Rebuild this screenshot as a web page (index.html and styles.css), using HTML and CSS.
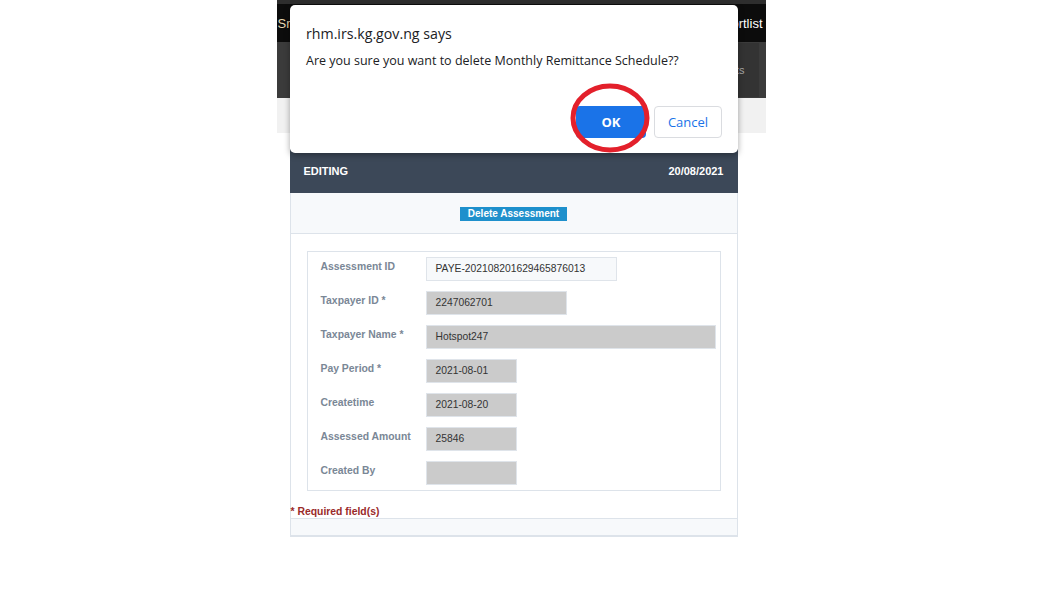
FILE: index.html
```html
<!DOCTYPE html>
<html>
<head>
<meta charset="utf-8">
<link rel="stylesheet" href="styles.css">
</head>
<body>
<div class="shell">
  <div class="tabstrip">
    <span class="tab-left">Sm</span>
    <span class="tab-right">Shortlist</span>
  </div>
  <div class="navbar">
    <div class="navbox">Reports</div>
  </div>
  <div class="subbar"></div>

  <div class="card">
    <div class="card-head">
      <span>EDITING</span>
      <span>20/08/2021</span>
    </div>
    <div class="toolbar">
      <button class="btn-delete">Delete Assessment</button>
    </div>
    <div class="card-body">
      <div class="fieldset">
        <div class="row">
          <label class="lbl">Assessment ID</label>
          <div class="inp inp-light w190">PAYE-202108201629465876013</div>
        </div>
        <div class="row">
          <label class="lbl">Taxpayer ID *</label>
          <div class="inp w140">2247062701</div>
        </div>
        <div class="row">
          <label class="lbl">Taxpayer Name *</label>
          <div class="inp w290">Hotspot247</div>
        </div>
        <div class="row">
          <label class="lbl">Pay Period *</label>
          <div class="inp w90">2021-08-01</div>
        </div>
        <div class="row">
          <label class="lbl">Createtime</label>
          <div class="inp w90">2021-08-20</div>
        </div>
        <div class="row">
          <label class="lbl">Assessed Amount</label>
          <div class="inp w90">25846</div>
        </div>
        <div class="row">
          <label class="lbl">Created By</label>
          <div class="inp w90"></div>
        </div>
      </div>
      <div class="required">* Required field(s)</div>
    </div>
    <div class="card-foot"></div>
  </div>
</div>

<div class="dialog">
  <div class="dlg-title">rhm.irs.kg.gov.ng says</div>
  <div class="dlg-msg">Are you sure you want to delete Monthly Remittance Schedule??</div>
  <div class="dlg-actions">
    <button class="dlg-ok">OK</button>
    <button class="dlg-cancel">Cancel</button>
  </div>
</div>

<svg class="circle" width="90" height="80" viewBox="0 0 90 80">
  <ellipse cx="45" cy="40" rx="37" ry="32" fill="none" stroke="#e3202b" stroke-width="5"/>
</svg>
</body>
</html>
```

FILE: styles.css
```css
html, body {
  margin: 0;
  padding: 0;
  background: #ffffff;
}
body {
  font-family: "Liberation Sans", Arial, sans-serif;
  position: relative;
  height: 598px;
  overflow: hidden;
}
.shell {
  width: 489px;
  margin: 0 auto;
}
.tabstrip {
  height: 38px;
  border-top: 4px solid #2e2e2e;
  background: #0c0c0c;
  display: flex;
  justify-content: space-between;
  align-items: center;
  font-size: 13px;
  white-space: nowrap;
}
.tab-left {
  color: #e7d7b0;
  margin-left: 1px;
}
.tab-right {
  color: #ffffff;
  margin-right: 3px;
}
.navbar {
  height: 56px;
  background: #3b3b3b;
  display: flex;
  justify-content: flex-end;
  align-items: center;
}
.navbox {
  width: 80px;
  height: 54px;
  margin-right: 7px;
  background: #333333;
  color: #a8a8a8;
  font-size: 11px;
  display: flex;
  align-items: center;
  justify-content: flex-end;
  padding-right: 14px;
  box-sizing: border-box;
}
.subbar {
  height: 35px;
  background: #f1f1f1;
  margin-bottom: 16px;
}
.card {
  width: 448px;
  margin-left: 13px;
}
.card-head {
  height: 44px;
  background: #3c4858;
  color: #ffffff;
  font-weight: bold;
  font-size: 11px;
  display: flex;
  justify-content: space-between;
  align-items: center;
  padding: 0 14px;
}
.toolbar {
  background: #f7f9fb;
  border: 1px solid #dde3ea;
  border-top: none;
  display: flex;
  justify-content: center;
  padding-top: 14px;
  box-sizing: border-box;
  height: 41px;
}
.btn-delete {
  height: 14px;
  width: 107px;
  padding: 0;
  border: none;
  background: #1e90cc;
  color: #ffffff;
  font-family: "Liberation Sans", Arial, sans-serif;
  font-size: 10px;
  font-weight: bold;
  line-height: 14px;
}
.card-body {
  border-left: 1px solid #dde3ea;
  border-right: 1px solid #dde3ea;
  padding-top: 17px;
}
.fieldset {
  margin: 0 16px;
  border: 1px solid #dde3ea;
  padding: 5px 4px 5px 13px;
  display: flex;
  flex-direction: column;
  gap: 10px;
}
.row {
  display: flex;
  align-items: flex-start;
  height: 24px;
}
.lbl {
  width: 105px;
  flex: none;
  color: #7a8796;
  font-size: 10.4px;
  font-weight: bold;
  padding-top: 4px;
  line-height: 12px;
}
.inp {
  height: 24px;
  box-sizing: border-box;
  border: 1px solid #dfe4ea;
  background: #cbcbcb;
  color: #333333;
  font-size: 10.3px;
  line-height: 22px;
  padding-left: 9px;
}
.inp-light {
  background: #f7f9fb;
}
.w190 { width: 191px; }
.w140 { width: 141px; }
.w290 { width: 291px; }
.w90 { width: 91px; }
.required {
  margin-top: 15px;
  color: #9a2a2a;
  font-weight: bold;
  font-size: 10.4px;
  line-height: 12px;
}
.card-foot {
  height: 16px;
  background: #f7f9fb;
  border: 1px solid #dde3ea;
  border-bottom-width: 2px;
}
.dialog {
  position: absolute;
  left: 290px;
  top: 5px;
  width: 448px;
  height: 148px;
  box-sizing: border-box;
  background: #ffffff;
  border-radius: 5px;
  box-shadow: 0 2px 6px rgba(0, 0, 0, 0.35);
  padding: 20px 16px 0 16px;
  font-family: "Open Sans", "Noto Sans", sans-serif;
  color: #202124;
}
.dlg-title {
  font-size: 14.2px;
  line-height: 18px;
}
.dlg-msg {
  font-size: 12.5px;
  line-height: 16px;
  margin-top: 10px;
}
.dlg-actions {
  display: flex;
  justify-content: flex-end;
  gap: 8px;
  margin-top: 37px;
}
.dlg-ok {
  width: 70px;
  height: 32px;
  border: none;
  border-radius: 4px;
  background: #1a73e8;
  color: #ffffff;
  font-family: "Open Sans", "Noto Sans", sans-serif;
  font-weight: bold;
  font-size: 13px;
}
.dlg-cancel {
  width: 68px;
  height: 32px;
  border: 1px solid #dadce0;
  border-radius: 4px;
  background: #ffffff;
  color: #1a73e8;
  font-family: "Open Sans", "Noto Sans", sans-serif;
  font-size: 13px;
}
.circle {
  position: absolute;
  left: 565px;
  top: 78px;
}
```
